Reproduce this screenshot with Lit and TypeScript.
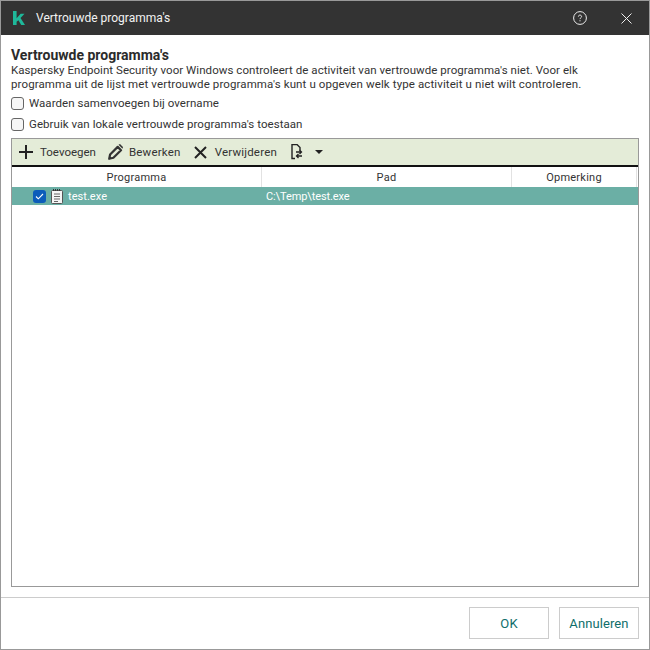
import { LitElement, html, css } from "lit";
import { customElement } from "lit/decorators.js";

@customElement("app-root")
export class AppRoot extends LitElement {
  static styles = css`
    :host { display: block; width: 650px; height: 650px; font-family: Roboto, "Open Sans", sans-serif; font-size: 11.5px; color: #333; }
    * { box-sizing: border-box; }
    .win { width: 650px; height: 650px; border: 1px solid #999; display: flex; flex-direction: column; background: #fff; }
    .title { height: 34px; flex: none; background: #333; color: #f2f2f2; display: flex; align-items: center; padding: 0 17px 0 12px; }
    .title .name { margin-left: 11px; flex: 1; font-size: 12px; letter-spacing: 0; }
    .title .help { margin-right: 34px; display: block; }
    .main { flex: 1; display: flex; flex-direction: column; padding: 12px 10px 0 10px; min-height: 0; }
    h1 { margin: 0; font-size: 14px; font-weight: 700; line-height: 16px; color: #2b2b2b; }
    p { margin: 0; line-height: 14px; letter-spacing: 0.05px; color: #333; white-space: nowrap; }
    p.wide { letter-spacing: 0.11px; }
    .check { display: flex; align-items: center; gap: 5px; height: 14px; margin-top: 7px; letter-spacing: 0.05px; line-height: 14px; }
    .check.first { margin-top: 5px; }
    .box { width: 13px; height: 13px; border: 1px solid #666; border-radius: 3px; background: #f6f6f6; flex: none; }
    .table { margin-top: 7px; flex: 1; border: 1px solid #999; display: flex; flex-direction: column; min-height: 0; }
    .tools { height: 28px; flex: none; background: #e4ecd8; border-bottom: 2px solid #111; display: flex; align-items: center; padding-left: 7px; color: #333; }
    .tool { display: flex; align-items: center; gap: 7px; margin-right: 12px; }
    .tool.edit { gap: 6px; margin-right: 13px; letter-spacing: 0.2px; }
    .tool.del { gap: 8px; margin-right: 14px; letter-spacing: 0.2px; }
    .tool svg { display: block; flex: none; }
    .heads { height: 20px; flex: none; display: grid; grid-template-columns: 250px 250px 125px 1fr; font-size: 11px; }
    .heads div { text-align: center; line-height: 21px; border-right: 1px solid #e2e2e2; letter-spacing: 0.25px; }
    .heads .end { border: 0; }
    .row { height: 18px; flex: none; background: #6bafa5; color: #fff; display: grid; grid-template-columns: 250px 1fr; align-items: center; font-size: 11px; letter-spacing: 0.05px; }
    .cell1 { display: flex; align-items: center; padding-left: 21px; }
    .cb { width: 13px; height: 13px; border-radius: 3px; background: #0c5cba; display: flex; align-items: center; justify-content: center; flex: none; }
    .doc { margin-left: 5px; margin-right: 5px; display: block; flex: none; }
    .cell2 { padding-left: 4px; letter-spacing: -0.1px; }
    .footer { height: 52px; flex: none; margin-top: 10px; border-top: 1px solid #ccc; display: flex; justify-content: flex-end; gap: 10px; padding: 9px 10px 0 0; }
    .btn { width: 80px; height: 32px; border: 1px solid #ccc; display: flex; align-items: center; justify-content: center; color: #0f6e6a; font-size: 13px; letter-spacing: 0.1px; background: #fff; }
    .arrows { gap: 12px; }
  `;

  render() {
    return html`
      <div class="win">
        <div class="title">
          <svg width="12" height="14" viewBox="0 0 12 14"><path d="M0 0h3.600v14H0zM3.600 7.200 7.600 2.800h3.900L7.500 7l4.500 7H8.200L5.400 9.200 3.600 10.800z" fill="#1fb89a"/></svg>
          <span class="name">Vertrouwde programma's</span>
          <svg class="help" width="14" height="14" viewBox="0 0 14 14" fill="none"><circle cx="7" cy="7" r="6.400" stroke="#eee"/><path d="M5.400 5.600c0-1 .7-1.500 1.600-1.500s1.600.6 1.600 1.400c0 1.300-1.600 1.300-1.600 2.600" stroke="#eee"/><rect x="6.500" y="9.200" width="1" height="1.100" fill="#eee"/></svg>
          <svg width="11" height="11" viewBox="0 0 11 11" fill="none"><path d="M.5.500l10 10M10.500.500l-10 10" stroke="#eee"/></svg>
        </div>
        <div class="main">
          <h1>Vertrouwde programma's</h1>
          <p>Kaspersky Endpoint Security voor Windows controleert de activiteit van vertrouwde programma's niet. Voor elk</p>
          <p class="wide">programma uit de lijst met vertrouwde programma's kunt u opgeven welk type activiteit u niet wilt controleren.</p>
          <div class="check first"><span class="box"></span>Waarden samenvoegen bij overname</div>
          <div class="check"><span class="box"></span>Gebruik van lokale vertrouwde programma's toestaan</div>
          <div class="table">
            <div class="tools">
              <div class="tool"><svg width="14" height="14" viewBox="0 0 14 14"><path d="M6 0h2v6h6v2H8v6H6V8H0V6h6z" fill="#222"/></svg>Toevoegen</div>
              <div class="tool edit"><svg width="15" height="16" viewBox="0 0 15 16" fill="none"><path d="M1.200 14.800l.9-4.300L9.700 2.900l3.300 3.300-7.600 7.600z" stroke="#333" stroke-width="2.200" stroke-linejoin="round"/><path d="M10.500.8l1.500-.8 3 3-.5 1.700zM1 15l.5-3 2.500 2.500z" fill="#333"/></svg>Bewerken</div>
              <div class="tool del"><svg width="13" height="13" viewBox="0 0 13 13" fill="none"><path d="M1 1l11 11M12 1L1 12" stroke="#222" stroke-width="2"/></svg>Verwijderen</div>
              <div class="tool arrows">
                <svg width="12" height="16" viewBox="0 0 12 16" fill="none"><path d="M4 14.500H1v-14h5l3 3v3" stroke="#222" stroke-width="1.400"/><path d="M5 8h5.500M8.500 6l2 2-2 2M11 12H5.500M7.500 10l-2 2 2 2" stroke="#222" stroke-width="1.300"/></svg>
                <svg width="8" height="4" viewBox="0 0 8 4"><path d="M0 0h8L4 4z" fill="#222"/></svg>
              </div>
            </div>
            <div class="heads"><div>Programma</div><div>Pad</div><div>Opmerking</div><div class="end"></div></div>
            <div class="row">
              <div class="cell1">
                <span class="cb"><svg width="9" height="7" viewBox="0 0 9 7" fill="none"><path d="M1 3.500l2.300 2.300L8 1" stroke="#fff" stroke-width="1.100"/></svg></span>
                <svg class="doc" width="12" height="15" viewBox="0 0 12 15"><rect x=".5" y="1.500" width="11" height="13" rx="1" fill="#f5f5f5" stroke="#555"/><path d="M3 5h6M3 7.500h6M3 10h6M3 12.500h4" stroke="#666"/><path d="M2 1h8" stroke="#333" stroke-dasharray="1 1" stroke-width="2"/></svg>
                test.exe
              </div>
              <div class="cell2">C:\\Temp\\test.exe</div>
            </div>
          </div>
        </div>
        <div class="footer"><div class="btn">OK</div><div class="btn">Annuleren</div></div>
      </div>
    `;
  }
}
